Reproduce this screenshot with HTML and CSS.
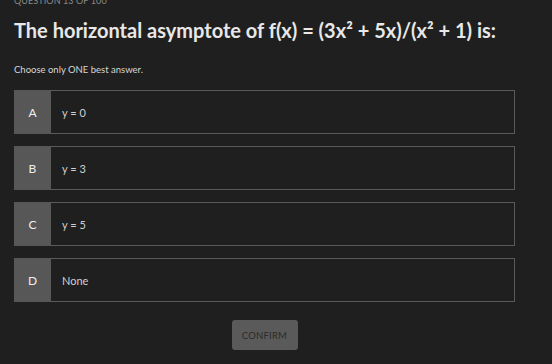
FILE: index.html
```html
<!DOCTYPE html>
<html>
<head>
<meta charset="utf-8">
<link rel="stylesheet" href="styles.css">
</head>
<body>
<main class="quiz">
  <div class="counter">QUESTION 13 OF 100</div>
  <h1 class="question">The horizontal asymptote of f(x) = (3x² + 5x)/(x² + 1) is:</h1>
  <p class="hint">Choose only ONE best answer.</p>
  <div class="options">
    <div class="option"><div class="letter">A</div><div class="answer">y = 0</div></div>
    <div class="option"><div class="letter">B</div><div class="answer">y = 3</div></div>
    <div class="option"><div class="letter">C</div><div class="answer">y = 5</div></div>
    <div class="option"><div class="letter">D</div><div class="answer">None</div></div>
  </div>
  <div class="actions"><button class="confirm">CONFIRM</button></div>
</main>
</body>
</html>
```

FILE: styles.css
```css
html, body {
  margin: 0;
  padding: 0;
  background: #1f1f1f;
  height: 100%;
  overflow: hidden;
}
body {
  font-family: "Lato", "Noto Sans", sans-serif;
  color: #e6e6e6;
}
.quiz {
  width: 501px;
  padding: 0 14px;
  margin-top: -5px;
}
.counter {
  font-size: 9px;
  line-height: 12px;
  color: #8a8a8a;
  letter-spacing: 0.1px;
}
.question {
  margin: 10px 0 0;
  font-size: 20px;
  line-height: 26px;
  font-weight: 700;
  color: #e8e8e8;
}
.hint {
  margin: 21px 0 0;
  font-size: 9.5px;
  line-height: 12px;
  color: #d6d6d6;
}
.options {
  display: flex;
  flex-direction: column;
  gap: 12px;
  margin-top: 14px;
}
.option {
  display: flex;
  height: 44px;
  box-sizing: border-box;
  border: 1px solid #5a5a5a;
  border-left: none;
}
.letter {
  width: 37px;
  background: #575757;
  display: flex;
  align-items: center;
  justify-content: center;
  font-size: 12px;
  color: #eeeeee;
  margin: -1px 0;
  border-radius: 1px 0 0 1px;
}
.answer {
  display: flex;
  align-items: center;
  padding-left: 11px;
  font-size: 11px;
  color: #d0d0d0;
}
.actions {
  display: flex;
  justify-content: center;
  margin-top: 18px;
}
.confirm {
  width: 66px;
  height: 30px;
  border: none;
  border-radius: 3px;
  background: #5a5a5a;
  color: #2b2b2b;
  font-family: "Lato", "Noto Sans", sans-serif;
  font-size: 9.5px;
  letter-spacing: 0.2px;
  padding: 0;
}
```
